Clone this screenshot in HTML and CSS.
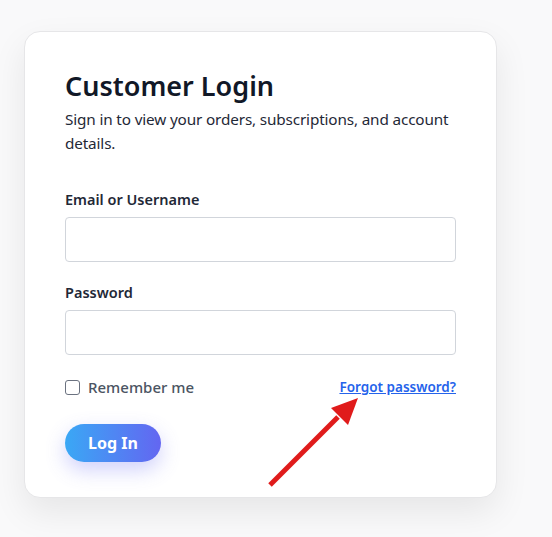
FILE: index.html
```html
<!DOCTYPE html>
<html lang="en">
<head>
<meta charset="utf-8">
<title>Customer Login</title>
<link rel="stylesheet" href="styles.css">
</head>
<body>
<div class="page">
  <form class="card">
    <h1 class="title">Customer Login</h1>
    <p class="subtitle">Sign in to view your orders, subscriptions, and account details.</p>
    <div class="field">
      <label class="label" for="email">Email or Username</label>
      <input class="input" id="email" type="text">
    </div>
    <div class="field">
      <label class="label" for="pw">Password</label>
      <input class="input" id="pw" type="password">
    </div>
    <div class="row">
      <label class="remember"><span class="check"></span>Remember me</label>
      <a class="forgot" href="#">Forgot password?</a>
    </div>
    <button class="btn" type="button">Log In</button>
  </form>
  <svg class="arrow" width="100" height="100" viewBox="0 0 100 100">
    <line x1="10" y1="89" x2="78" y2="21" stroke="#e01b1b" stroke-width="5"/>
    <polygon points="98,2 88,29 71,12" fill="#e01b1b"/>
  </svg>
</div>
</body>
</html>
```
FILE: styles.css
```css
* { box-sizing: border-box; }
html, body { margin: 0; padding: 0; }
body {
  background: #f9f9fa;
  font-family: "Noto Sans", "Open Sans", sans-serif;
  color: #111827;
}
.page {
  position: relative;
  padding: 31px 24px 40px;
  width: 552px;
  min-height: 537px;
}
.card {
  width: 473px;
  background: #fff;
  border: 1px solid #e6e6e8;
  border-radius: 16px;
  padding: 36px 40px 35px;
  box-shadow: 0 14px 34px rgba(0,0,0,0.08);
  display: flex;
  flex-direction: column;
}
.title {
  margin: 0;
  font-size: 27px;
  font-weight: 600;
  line-height: 36px;
  color: #111827;
}
.subtitle {
  margin: 3px 0 0;
  font-size: 15.3px;
  letter-spacing: -0.15px;
  line-height: 24px;
  color: #1f2937;
}
.field {
  margin-top: 34px;
  display: flex;
  flex-direction: column;
}
.field + .field { margin-top: 20px; }
.label {
  font-size: 14.5px;
  font-weight: 600;
  line-height: 20px;
  margin-bottom: 8px;
  color: #1f2937;
}
.input {
  height: 45px;
  border: 1px solid #d1d5db;
  border-radius: 4px;
  background: #fff;
  font: inherit;
  padding: 0 12px;
}
.row {
  margin-top: 22px;
  display: flex;
  align-items: center;
  justify-content: space-between;
}
.remember {
  display: flex;
  align-items: center;
  gap: 8px;
  font-size: 15px;
  font-weight: 500;
  color: #4b5563;
}
.check {
  width: 15px;
  height: 15px;
  border: 1.5px solid #6b7280;
  border-radius: 3px;
}
.forgot {
  font-size: 13.5px;
  font-weight: 600;
  color: #2563eb;
  text-decoration: underline;
}
.btn {
  margin-top: 27px;
  align-self: flex-start;
  width: 96px;
  height: 38px;
  border: none;
  border-radius: 19px;
  background: linear-gradient(90deg, #3aa8f5, #6366f1);
  color: #fff;
  font: inherit;
  font-size: 16px;
  font-weight: 700;
  box-shadow: 0 8px 20px rgba(99,102,241,0.3);
}
.arrow {
  position: absolute;
  left: 260px;
  top: 396px;
}
```
